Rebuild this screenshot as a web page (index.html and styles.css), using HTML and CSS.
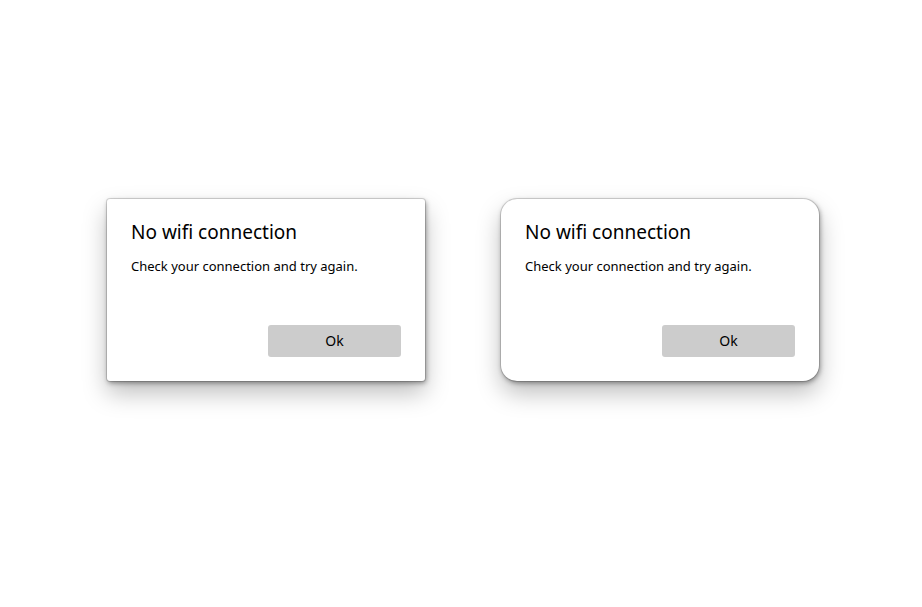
FILE: index.html
```html
<!DOCTYPE html>
<html>
<head>
<meta charset="utf-8">
<link rel="stylesheet" href="styles.css">
</head>
<body>
<main class="stage">
  <section class="dialog dialog-square">
    <h1 class="title">No wifi connection</h1>
    <p class="message">Check your connection and try again.</p>
    <div class="actions"><button class="btn">Ok</button></div>
  </section>
  <section class="dialog dialog-round">
    <h1 class="title">No wifi connection</h1>
    <p class="message">Check your connection and try again.</p>
    <div class="actions"><button class="btn">Ok</button></div>
  </section>
</main>
</body>
</html>
```
FILE: styles.css
```css
html, body {
  margin: 0;
  padding: 0;
  background: #ffffff;
}
body {
  font-family: "Noto Sans", "Open Sans", sans-serif;
  color: #000;
  min-height: 607px;
}
.stage {
  display: flex;
  justify-content: center;
  gap: 76px;
  padding-top: 199px;
  padding-bottom: 80px;
  padding-left: 4px;
}
.dialog {
  box-sizing: border-box;
  width: 318px;
  height: 182px;
  background: #fff;
  padding: 20px 24px 24px 24px;
  display: flex;
  flex-direction: column;
  box-shadow: 0 0 0 1px rgba(0,0,0,0.14), 1px 2px 5px rgba(0,0,0,0.4), 0 12px 24px rgba(0,0,0,0.26);
}
.dialog-square { border-radius: 3px; }
.dialog-round { border-radius: 16px; }
.title {
  margin: 0;
  font-size: 19px;
  font-weight: 400;
  line-height: 26px;
}
.message {
  margin: 12px 0 0 0;
  font-size: 13px;
  line-height: 18px;
}
.actions {
  margin-top: auto;
  display: flex;
  justify-content: flex-end;
}
.btn {
  width: 133px;
  height: 32px;
  border: none;
  border-radius: 3px;
  background: #cccccc;
  font-family: inherit;
  font-size: 14px;
  line-height: 30px;
  color: #000;
  padding: 0;
}
```
